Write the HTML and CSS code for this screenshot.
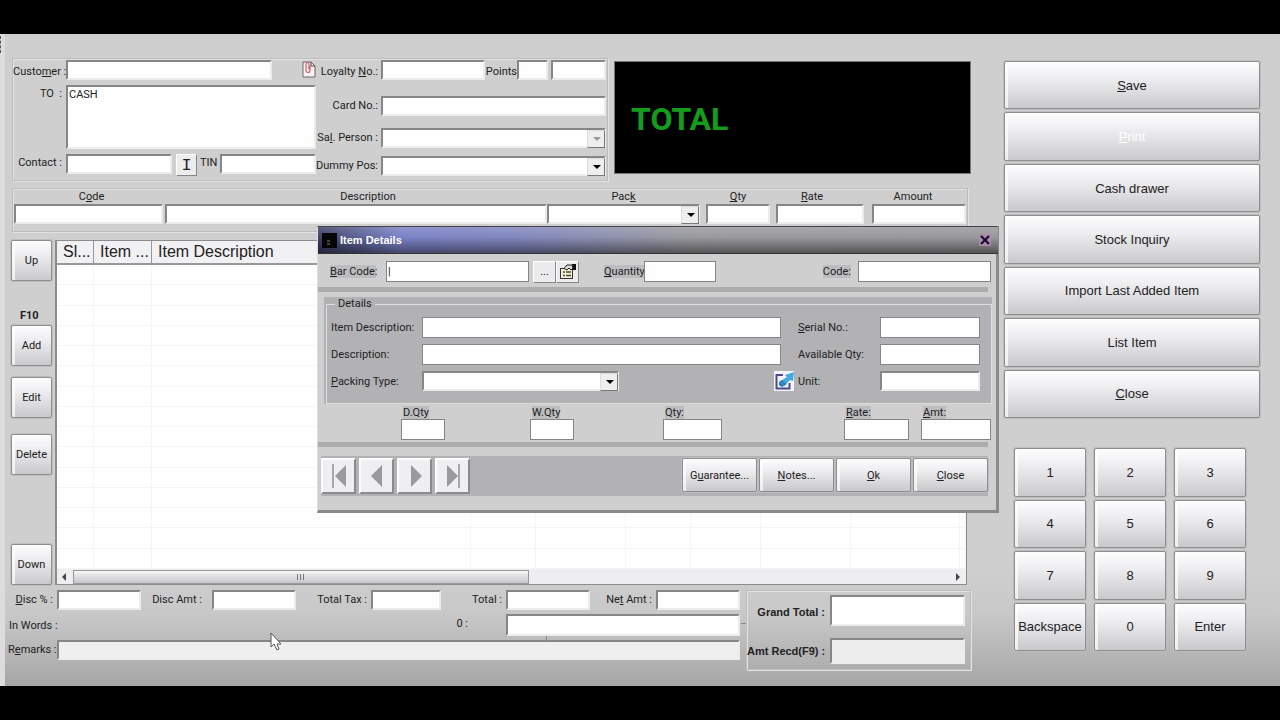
FILE: index.html
```html
<!DOCTYPE html>
<html lang="en">
<head>
    <meta charset="UTF-8">
    <meta name="viewport" content="width=device-width, initial-scale=1.0">
    <title>Point of Sale</title>
    <link rel="stylesheet" href="styles.css">
</head>
<body>

    <main class="screen">
        <div class="work-area">

            <section class="top-row">
                <div class="panel customer-panel">
                    <div class="customer-grid">
                        <label for="customer" class="low">Custo<u>m</u>er :</label>
                        <div class="line">
                            <input type="text" id="customer" class="box customer-input">
                            <button class="attach" aria-label="Attachment">
                                <svg width="15" height="18" viewBox="0 0 15 18">
                                    <path d="M2 2h8l4 4v11H2z" fill="#f8f4f4" stroke="#666"/>
                                    <path d="M10 2v4h4" fill="none" stroke="#444"/>
                                    <path d="M9 6v4.500a2 2 0 0 1-4 0V4a1.500 1.500 0 0 1 3 0v5.500" fill="none" stroke="#d25a64" stroke-width="1.200"/>
                                </svg>
                            </button>
                        </div>
                        <label for="to">TO &nbsp;:</label>
                        <textarea id="to" class="box">CASH</textarea>
                        <label for="contact">Contact :</label>
                        <div class="line">
                            <input type="text" id="contact" class="box contact-input">
                            <button class="tool-btn info-btn">I</button>
                            <label for="tin">TIN</label>
                            <input type="text" id="tin" class="box grow">
                        </div>
                    </div>
                    <div class="loyalty-grid">
                        <label for="loyalty" class="low">Loyalty <u>N</u>o.:</label>
                        <div class="line">
                            <input type="text" id="loyalty" class="box loyalty-input">
                            <label for="points" class="low">Points</label>
                            <input type="text" id="points" class="box points-input">
                            <input type="text" aria-label="Points value" class="box grow">
                        </div>
                        <label for="card">Card No.:</label>
                        <input type="text" id="card" class="box">
                        <label for="sal-person">Sa<u>l</u>. Person :</label>
                        <span class="combo disabled"><select id="sal-person" class="box" disabled><option></option></select></span>
                        <label for="dummy-pos">Dummy Pos:</label>
                        <span class="combo"><select id="dummy-pos" class="box"><option></option></select></span>
                    </div>
                </div>
                <div class="total-display">TOTAL</div>
            </section>

            <section class="panel entry-panel">
                <div class="entry code"><label for="e-code">C<u>o</u>de</label><input type="text" id="e-code" class="box"></div>
                <div class="entry desc"><label for="e-desc">Description</label><input type="text" id="e-desc" class="box"></div>
                <div class="entry pack"><label for="e-pack">Pac<u>k</u></label><span class="combo"><select id="e-pack" class="box"><option></option></select></span></div>
                <div class="entry qty"><label for="e-qty"><u>Q</u>ty</label><input type="text" id="e-qty" class="box"></div>
                <div class="entry rate"><label for="e-rate"><u>R</u>ate</label><input type="text" id="e-rate" class="box"></div>
                <div class="entry amount"><label for="e-amount">Amount</label><input type="text" id="e-amount" class="box"></div>
            </section>

            <section class="middle">
                <div class="side-buttons">
                    <button class="btn">Up</button>
                    <span class="shortcut">F10</span>
                    <button class="btn add">Add</button>
                    <button class="btn edit">Edit</button>
                    <button class="btn delete">Delete</button>
                    <button class="btn down">Down</button>
                </div>
                <div class="items">
                    <table>
                        <colgroup>
                            <col class="c-sl"><col class="c-item"><col><col class="c-65"><col class="c-90"><col class="c-65"><col class="c-70"><col class="c-90"><col class="c-109"><col class="c-end">
                        </colgroup>
                        <thead>
                            <tr><th>Sl...</th><th>Item ...</th><th>Item Description</th><th></th><th></th><th></th><th></th><th></th><th></th><th></th></tr>
                        </thead>
                        <tbody id="item-rows"></tbody>
                    </table>
                    <div class="scrollbar">
                        <span class="arrow-left"></span>
                        <div class="track"><div class="thumb"><i></i><i></i><i></i></div></div>
                        <span class="arrow-right"></span>
                    </div>
                </div>
            </section>

            <section class="footer-row">
                <div class="totals">
                    <label for="disc"><u>D</u>isc % :</label>
                    <input type="text" id="disc" class="box">
                    <label for="disc-amt" class="wide-gap">Disc Amt :</label>
                    <input type="text" id="disc-amt" class="box">
                    <label for="tax">Total Tax :</label>
                    <input type="text" id="tax" class="box">
                    <label for="total">Total :</label>
                    <input type="text" id="total" class="box">
                    <label for="net">Ne<u>t</u> Amt :</label>
                    <input type="text" id="net" class="box">
                    <span class="in-words">In Words :</span>
                    <label for="rounded" class="zero">0 :</label>
                    <input type="text" id="rounded" class="box rounded">
                    <label for="remarks" class="remarks-label">R<u>e</u>marks :</label>
                    <input type="text" id="remarks" class="box remarks">
                </div>
                <div class="panel grand">
                    <label for="grand">Grand Total :</label>
                    <input type="text" id="grand" class="box">
                    <label for="recd">Amt Recd(F9) :</label>
                    <input type="text" id="recd" class="box soft">
                </div>
            </section>
        </div>

        <aside class="actions">
            <div class="menu">
                <button class="btn"><u>S</u>ave</button>
                <button class="btn" disabled><u>P</u>rint</button>
                <button class="btn">Cash drawer</button>
                <button class="btn">Stock Inquiry</button>
                <button class="btn">Import Last Added Item</button>
                <button class="btn">List Item</button>
                <button class="btn"><u>C</u>lose</button>
            </div>
            <div class="keypad">
                <button class="btn">1</button>
                <button class="btn">2</button>
                <button class="btn">3</button>
                <button class="btn">4</button>
                <button class="btn">5</button>
                <button class="btn">6</button>
                <button class="btn">7</button>
                <button class="btn">8</button>
                <button class="btn">9</button>
                <button class="btn">Backspace</button>
                <button class="btn">0</button>
                <button class="btn">Enter</button>
            </div>
        </aside>

        <div class="dialog" role="dialog" aria-labelledby="dialog-title">
            <header class="title-bar">
                <svg width="15" height="15" viewBox="0 0 15 15"><rect width="15" height="15" fill="#050505"/><path d="M5 8h3M5 11h3" stroke="#7d8a55"/></svg>
                <h1 id="dialog-title">Item Details</h1>
                <button class="close-x" aria-label="Close window">
                    <svg width="12" height="12" viewBox="0 0 12 12"><rect width="12" height="12" fill="#a98bb0"/><path d="M2 2l8 8M10 2l-8 8" stroke="#1d0a2c" stroke-width="2.200"/></svg>
                </button>
            </header>

            <div class="barcode-row">
                <label for="barcode" class="tag"><u>B</u>ar Code:</label>
                <input type="text" id="barcode" class="flat barcode-input" value="|">
                <button class="tool-btn">...</button>
                <button class="tool-btn" aria-label="Properties">
                    <svg width="18" height="17" viewBox="0 0 18 17">
                        <rect x="1.500" y="5.500" width="12" height="10" fill="#f4f1d8" stroke="#333"/>
                        <path d="M4 9h2M4 12.500h2M7 9h5M7 12.500h5" stroke="#4a4a30" stroke-width="1.500"/>
                        <path d="M5 5.500l3-3.500h5l1 3-2 2-2-2-2 2z" fill="#ddd" stroke="#222"/>
                        <path d="M13 1h4v6h-3z" fill="#111"/>
                    </svg>
                </button>
                <label for="quantity" class="tag quantity"><u>Q</u>uantity</label>
                <input type="text" id="quantity" class="flat quantity-input">
                <label for="code" class="tag code-label">Code:</label>
                <input type="text" id="code" class="flat code-input">
            </div>
            <hr>

            <div class="details">
                <fieldset>
                    <legend>Details</legend>
                    <div class="details-grid">
                        <label for="d-item">Item Description:</label>
                        <input type="text" id="d-item" class="flat">
                        <label for="serial" class="second"><u>S</u>erial No.:</label>
                        <input type="text" id="serial" class="flat">
                        <label for="d-desc">Description:</label>
                        <input type="text" id="d-desc" class="flat">
                        <label for="avail" class="second">Available Qty:</label>
                        <input type="text" id="avail" class="flat">
                        <label for="packing"><u>P</u>acking Type:</label>
                        <div class="line packing-line">
                            <span class="combo"><select id="packing" class="box"><option></option></select></span>
                            <button class="edit-unit" aria-label="Edit unit">
                                <svg width="21" height="20" viewBox="0 0 21 20">
                                    <rect width="20" height="20" fill="#f3f5fb"/>
                                    <path d="M9 4H2.500v13.500h13V12" fill="none" stroke="#4a4a8c" stroke-width="2"/>
                                    <path d="M11 4l9-3-1 9-3-1-6 6-5-4 8-5z" fill="#45a9df"/>
                                    <path d="M5 11l5 4-2 1-3-2z" fill="#2a6fae"/>
                                    <path d="M8 9l5 4-3 2-5-4z" fill="#2f86c4"/>
                                </svg>
                            </button>
                        </div>
                        <label for="unit" class="second">Unit:</label>
                        <input type="text" id="unit" class="box">
                    </div>
                </fieldset>
            </div>

            <div class="amounts-row">
                <div class="amount-cell"><label for="dqty" class="tag">D.Qty</label><input type="text" id="dqty" class="flat w-small"></div>
                <div class="amount-cell wqty"><label for="wqty" class="tag">W.Qty</label><input type="text" id="wqty" class="flat w-small"></div>
                <div class="amount-cell mqty"><label for="mqty" class="tag">Qty:</label><input type="text" id="mqty" class="flat w-mid"></div>
                <div class="amount-cell mrate"><label for="mrate" class="tag"><u>R</u>ate:</label><input type="text" id="mrate" class="flat w-rate"></div>
                <div class="amount-cell"><label for="mamt" class="tag"><u>A</u>mt:</label><input type="text" id="mamt" class="flat w-amt"></div>
            </div>
            <hr>

            <div class="dialog-buttons">
                <div class="nav">
                    <button aria-label="First"><svg width="16" height="24" viewBox="0 0 16 24"><path d="M2 0v24" stroke="#8f8f92" stroke-width="1.500"/><path d="M15 1v22L4 12z" fill="#9a9a9d"/></svg></button>
                    <button aria-label="Previous"><svg width="16" height="24" viewBox="0 0 16 24"><path d="M13 1v22L2 12z" fill="#9a9a9d"/></svg></button>
                    <button aria-label="Next"><svg width="16" height="24" viewBox="0 0 16 24"><path d="M4 1v22l11-11z" fill="#9a9a9d"/></svg></button>
                    <button aria-label="Last"><svg width="16" height="24" viewBox="0 0 16 24"><path d="M14 0v24" stroke="#8f8f92" stroke-width="1.500"/><path d="M2 1v22l11-11z" fill="#9a9a9d"/></svg></button>
                </div>
                <div class="commands">
                    <button class="btn">G<u>u</u>arantee...</button>
                    <button class="btn"><u>N</u>otes...</button>
                    <button class="btn"><u>O</u>k</button>
                    <button class="btn"><u>C</u>lose</button>
                </div>
            </div>
        </div>

        <svg class="pointer" width="13" height="20" viewBox="0 0 13 20"><path d="M1 1v14l3-3 3 6 2-1-2-5h4z" fill="#fff" stroke="#555"/></svg>
    </main>

    <script>
        // empty rows of the bill
        const rows = document.getElementById("item-rows");
        for (let i = 0; i < 15; i++) {
            const tr = document.createElement("tr");
            for (let j = 0; j < 10; j++) {
                tr.appendChild(document.createElement("td"));
            }
            rows.appendChild(tr);
        }
    </script>

</body>
</html>
```
FILE: styles.css
```css
* {
    box-sizing: border-box;
}
body {
    margin: 0;
    padding: 34px 0;
    min-height: 100vh;
    display: flex;
    flex-direction: column;
    background: #000;
    color: #222;
    font-family: Roboto, "Liberation Sans", Arial, sans-serif;
    font-size: 11px;
}
button, input, select, textarea {
    font-family: inherit;
    font-size: inherit;
    color: inherit;
    margin: 0;
    border-radius: 0;
}
button {
    padding: 0;
}
label {
    line-height: 20px;
    white-space: nowrap;
}
.screen {
    position: relative;
    flex: 1;
    display: flex;
    gap: 33px;
    padding: 24px 20px 0 0;
    border-left: 5px solid #dcdbdd;
    background: linear-gradient(#cfcfcf, #cfcfcf 82%, #c8c8c8 89%, #a6a6a6);
}
/* edge of the window behind */
.screen::before {
    content: "";
    position: absolute;
    left: -5px;
    top: 2px;
    height: 17px;
    border-left: 1px dashed #555;
}
.work-area {
    flex: 1;
    min-width: 0;
    display: flex;
    flex-direction: column;
}
.line {
    display: flex;
}
.grow {
    flex: 1;
    min-width: 0;
}

/* fields */
.box {
    width: 100%;
    height: 20px;
    padding: 0 2px;
    background: #fefefe;
    border: 2px solid;
    border-color: #868686 #ececec #ececec #868686;
    outline: none;
}
.flat {
    width: 100%;
    height: 21px;
    padding: 0 1px;
    background: #fefefe;
    border: 1px solid #858585;
    outline: none;
}
.combo {
    position: relative;
    display: block;
}
.combo select {
    appearance: none;
    display: block;
    opacity: 1;
}
.combo::before {
    content: "";
    position: absolute;
    right: 1px;
    top: 2px;
    width: 16px;
    height: 16px;
    background: #eee;
    border: 1px solid;
    border-color: #ddd #777 #777 #ddd;
    pointer-events: none;
}
.combo::after {
    content: "";
    position: absolute;
    right: 5px;
    top: 9px;
    border: 4px solid transparent;
    border-top-color: #000;
    border-bottom: 0;
    pointer-events: none;
}
.combo.disabled::after {
    border-top-color: #999;
}
.panel {
    border: 1px solid #bcbcbc;
    box-shadow: 1px 1px #e3e3e3, inset 1px 1px #e3e3e3;
}
.btn {
    border: 1px solid #8e8e8e;
    border-radius: 2px;
    background: linear-gradient(#fdfdfe, #eeedf0 35%, #e0dfe2 60%, #c9c8cb);
    box-shadow: inset 3px 0 rgba(255, 255, 255, 0.7), 0 0 0 1px #bdbcbe;
    cursor: pointer;
}
.tool-btn {
    width: 23px;
    height: 22px;
    background: #ececee;
    border: 1px solid;
    border-color: #fff #888 #888 #fff;
    display: flex;
    align-items: center;
    justify-content: center;
}

/* customer and total */
.top-row {
    display: flex;
    gap: 6px;
    margin-left: 7px;
}
.customer-panel {
    flex: 1;
    display: flex;
    height: 123px;
    padding: 1px 1px 0 0;
}
.customer-grid {
    display: grid;
    grid-template-columns: 49px 250px;
    grid-template-rows: 20px 64px 20px;
    gap: 5px 4px;
    text-align: right;
}
.customer-grid label {
    line-height: 18px;
}
.customer-panel .low {
    line-height: 24px;
}
.customer-input {
    width: 206px;
}
.attach {
    margin-left: auto;
    border: 0;
    background: none;
}
textarea.box {
    height: 64px;
    resize: none;
    overflow: hidden;
    padding: 1px;
}
.contact-input {
    width: 106px;
}
.info-btn {
    width: 21px;
    margin: 0 3px 0 4px;
    font: 17px "Liberation Mono", monospace;
}
.line label[for="tin"] {
    width: 20px;
    text-align: left;
}
.loyalty-grid {
    flex: 1;
    display: grid;
    grid-template-columns: 62px 1fr;
    grid-template-rows: 36px 32px 28px 20px;
    column-gap: 3px;
    align-items: start;
    text-align: right;
}
.loyalty-input {
    width: 104px;
}
.line label[for="points"] {
    width: 32px;
}
.points-input {
    width: 31px;
    margin-right: 3px;
}
.total-display {
    width: 357px;
    height: 113px;
    margin-top: 3px;
    padding: 3px 0 0 16px;
    display: flex;
    align-items: center;
    background: #000;
    border: 1px solid #777;
    color: #149c1c;
    font: bold 32px Roboto, sans-serif;
}

/* entry line */
.entry-panel {
    display: grid;
    grid-template-columns: 151px 1fr 159px 70px 96px 94px;
    height: 44px;
    margin: 7px 3px 0 7px;
    padding: 0 1px;
}
.entry {
    display: flex;
    flex-direction: column;
    text-align: center;
}
.entry label {
    line-height: 15px;
}
.code {
    padding-right: 2px;
}
.code label {
    padding-left: 6px;
}
.desc label {
    padding-left: 24px;
}
.pack, .qty {
    padding-right: 6px;
}
.rate {
    padding-right: 8px;
}
.rate label {
    padding-right: 16px;
}
.amount label {
    padding-right: 12px;
}

/* items */
.middle {
    display: flex;
    gap: 3px;
    height: 345px;
    margin: 8px 4px 0 6px;
}
.side-buttons {
    display: flex;
    flex-direction: column;
    width: 41px;
}
.side-buttons .btn {
    height: 41px;
}
.shortcut {
    margin: 28px 0 2px;
    padding-left: 9px;
    line-height: 14px;
    font-weight: bold;
}
.edit {
    margin: 11px 0 16px;
}
.side-buttons .down {
    margin-top: auto;
}
.items {
    flex: 1;
    display: flex;
    flex-direction: column;
    border: 1px solid #8c8c8c;
    border-left-width: 2px;
    background: #fefefe;
}
table {
    width: 100%;
    height: 328px;
    table-layout: fixed;
    border-collapse: separate;
    border-spacing: 0;
}
th {
    height: 24px;
    padding: 0 0 0 6px;
    background: #f1f0f2;
    border-right: 1px solid #999;
    border-bottom: 2px solid #999;
    font-family: "Liberation Sans", Arial, sans-serif;
    font-size: 16px;
    font-weight: normal;
    text-align: left;
    white-space: nowrap;
}
td {
    padding: 0;
    border-right: 1px solid #f4f3f5;
    border-bottom: 1px solid #f4f3f5;
}
.c-sl { width: 37px; }
.c-item { width: 58px; }
.c-65 { width: 65px; }
.c-70 { width: 70px; }
.c-90 { width: 90px; }
.c-109 { width: 109px; }
.c-end { width: 6px; }
.scrollbar {
    flex: 1;
    display: flex;
    align-items: center;
    gap: 7px;
    padding: 0 6px 0 5px;
    background: #eeeef0;
}
.arrow-left, .arrow-right {
    border: 4px solid transparent;
}
.arrow-left {
    border-right-color: #444;
    border-left: 0;
}
.arrow-right {
    border-left-color: #444;
    border-right: 0;
}
.track {
    flex: 1;
}
.thumb {
    width: 52%;
    height: 14px;
    display: flex;
    align-items: center;
    justify-content: center;
    gap: 2px;
    border: 1px solid #999;
    background: linear-gradient(#f8f8f8, #dcdcde 50%, #c8c8ca);
}
.thumb i {
    width: 1px;
    height: 6px;
    background: #777;
}

/* totals */
.footer-row {
    display: flex;
    align-items: flex-start;
    margin-top: 5px;
}
.totals {
    position: relative;
    flex: 1;
    display: grid;
    grid-template-columns: 52px 6fr 71px 6fr 75px 5fr 65px 6fr 66px 6fr;
    grid-template-rows: 20px 22px 20px;
    row-gap: 4px;
    padding-right: 6px;
}
/* stray ends of the group lines */
.totals::before, .totals::after {
    content: "";
    position: absolute;
    background: #888;
}
.totals::before {
    right: 0;
    top: 33px;
    width: 5px;
    height: 1px;
}
.totals::after {
    right: 199px;
    top: 46px;
    width: 1px;
    height: 5px;
}
.totals label {
    padding-right: 4px;
    text-align: right;
}
.totals .wide-gap {
    padding-right: 10px;
}
.in-words {
    grid-column: 1 / 3;
    padding-left: 4px;
    line-height: 24px;
}
.totals .zero {
    grid-column: 3 / 8;
    padding-right: 38px;
}
.totals .remarks-label {
    padding: 0 0 0 3px;
    text-align: left;
}
.rounded {
    grid-column: 8 / 11;
    height: 22px;
}
.remarks {
    grid-column: 2 / 11;
    background: #efefef;
}
.grand {
    display: grid;
    grid-template-columns: 83px 135px;
    grid-template-rows: 31px 26px;
    row-gap: 12px;
    width: 225px;
    height: 80px;
    padding-top: 4px;
    font-family: "Liberation Sans", Arial, sans-serif;
    font-weight: bold;
}
.grand label {
    padding-right: 5px;
    line-height: 34px;
    text-align: right;
}
.grand label[for="recd"] {
    line-height: 26px;
}
.grand .box {
    height: 100%;
}
.grand .soft {
    background: #ededed;
}

/* right side */
.actions {
    width: 256px;
    padding-top: 3px;
    font-family: "Liberation Sans", Arial, sans-serif;
    font-size: 13px;
}
.menu {
    display: grid;
    grid-auto-rows: 1fr;
    gap: 3px;
    height: 357px;
}
.menu .btn:disabled {
    color: #fff;
    cursor: default;
}
.keypad {
    display: grid;
    grid-template-columns: repeat(3, 1fr);
    grid-auto-rows: 1fr;
    gap: 3px 8px;
    height: 203px;
    margin: 30px 14px 0 10px;
}

/* item details window */
.dialog {
    position: absolute;
    top: 192px;
    left: 312px;
    right: 281px;
    height: 287px;
    display: flex;
    flex-direction: column;
    background: #cfcfcf;
    border: 1px solid #444;
    border-left-color: #ddd;
    border-right: 3px solid #8a898c;
    border-bottom: 3px solid #8a898c;
}
.title-bar {
    display: flex;
    align-items: center;
    gap: 3px;
    height: 27px;
    margin-right: -2px;
    padding: 0 7px 0 4px;
    background:
        linear-gradient(rgba(255, 255, 255, 0.15), rgba(0, 0, 0, 0) 40%, rgba(0, 0, 0, 0.45)),
        linear-gradient(90deg, #3e4266, #7a82c6 12%, #8287bd 30%, #9a9a9d 55%, #98979a);
    border-bottom: 1px solid #333;
}
.title-bar h1 {
    flex: 1;
    margin: 0;
    color: #fff;
    font-family: "Liberation Sans", Arial, sans-serif;
    font-size: 11px;
}
.close-x {
    display: flex;
    border: 0;
    background: none;
}
.tag {
    line-height: 13px;
    background: #bdbdbf;
}
.barcode-row {
    display: flex;
    align-items: center;
    height: 33px;
    padding: 2px 5px 0 12px;
}
.barcode-row .tag:first-child {
    width: 46px;
}
.barcode-input {
    width: 143px;
    margin: 0 4px 0 10px;
}
.quantity {
    width: 40px;
    margin-left: 25px;
}
.quantity-input {
    width: 72px;
}
.code-label {
    margin-left: auto;
}
.code-input {
    width: 133px;
    margin-left: 7px;
}
.dialog hr {
    flex: none;
    width: 100%;
    height: 5px;
    margin: 0;
    border: 0;
    border-right: 8px solid #cfcfcf;
    background: #acacae;
}
.details {
    display: flex;
    height: 107px;
    margin: 5px 4px 0 6px;
    padding-left: 2px;
    background: #b2b2b4;
}
.details fieldset {
    flex: 1;
    min-width: 0;
    margin: 0;
    padding: 6px 11px 0 4px;
    border: 1px solid #dedede;
}
.details legend {
    margin-left: 4px;
    padding: 0 3px;
    line-height: 14px;
}
.details-grid {
    display: grid;
    grid-template-columns: 91px 1fr 99px 100px;
    gap: 6px 0;
}
.details-grid label {
    line-height: 22px;
    height: 21px;
}
.second {
    padding-left: 17px;
}
.packing-line {
    justify-content: space-between;
    margin-right: -14px;
}
.packing-line .combo {
    width: 197px;
}
.edit-unit {
    border: 0;
    background: none;
}
.amounts-row {
    display: flex;
    height: 38px;
    padding: 2px 5px 0 83px;
}
.amount-cell {
    display: flex;
    flex-direction: column;
    align-items: flex-start;
}
.amount-cell .tag {
    margin-left: 2px;
}
.wqty {
    margin-left: 85px;
}
.mqty {
    margin: 0 auto 0 89px;
}
.mrate {
    margin-right: 12px;
}
.w-small { width: 44px; }
.w-mid { width: 59px; }
.w-rate { width: 65px; }
.w-amt { width: 70px; }
.dialog-buttons {
    display: flex;
    justify-content: space-between;
    height: 40px;
    margin: 9px 8px 0 3px;
    padding-top: 2px;
    background: #b2b2b4;
}
.nav {
    display: flex;
    gap: 3px;
}
.nav button {
    width: 35px;
    height: 36px;
    display: flex;
    align-items: center;
    justify-content: center;
    background: #efeef1;
    border: 2px solid;
    border-color: #fdfdfd #8b8a8d #8b8a8d #fdfdfd;
}
.commands {
    display: flex;
    gap: 2px;
}
.commands .btn {
    width: 75px;
    height: 34px;
}

.pointer {
    position: absolute;
    left: 265px;
    top: 598px;
}
```
